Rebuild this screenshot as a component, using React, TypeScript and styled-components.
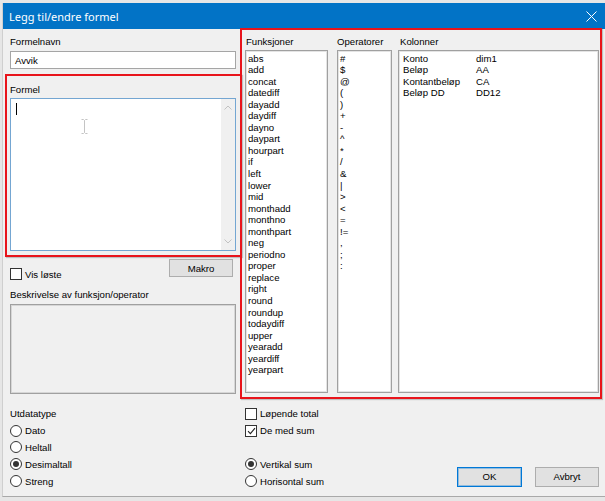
import React from "react";
import styled, { createGlobalStyle } from "styled-components";

const Global = createGlobalStyle`
  html, body { margin: 0; padding: 0; background: #e6e6e6; }
  body { font-family: "Liberation Sans", Arial, sans-serif; font-size: 9.6px; color: #000; }
  * { box-sizing: border-box; }
`;

const Screen = styled.div`
  width: 605px;
  height: 501px;
  overflow: hidden;
  padding: 3px 0 0 2px;
  background: #e6e6e6;
`;

const Window = styled.div`
  background: #f0f0f0;
  border-left: 1px solid #cfcfcf;
  border-bottom: 1px solid #a9a9a9;
  display: flex;
  flex-direction: column;
`;

const TitleBar = styled.div`
  height: 26px;
  background: #0273c6;
  color: #fff;
  display: flex;
  align-items: center;
  justify-content: space-between;
  padding: 0 8px 0 6px;
  font-family: "Noto Sans", "Open Sans", sans-serif;
  font-size: 11px;
`;

const Body = styled.div`
  padding: 0 6px 6.5px 7px;
  display: flex;
  flex-direction: column;
`;

const TopArea = styled.div`
  display: flex;
  gap: 9px;
  align-items: flex-start;
`;

const LeftTop = styled.div`
  width: 226px;
  display: flex;
  flex-direction: column;
  padding-top: 7px;
`;

const RightTop = styled.div`
  width: 354px;
  display: flex;
  flex-direction: column;
`;

const Label = styled.div<{ $pl?: number }>`
  height: 12px;
  line-height: 12px;
  white-space: nowrap;
  padding-left: ${(p) => p.$pl ?? 0}px;
`;

const TextInput = styled.div`
  margin-top: 3px;
  height: 18px;
  background: #fff;
  border: 1px solid #a5a5a5;
  padding: 0 4px;
  display: flex;
  align-items: center;
`;

const Highlight = styled.div<{ $t: number; $r: number; $b: number; $l: number; $mt: number }>`
  border: 2px solid #e8141b;
  box-shadow: 1px 1px 1px rgba(0, 0, 0, 0.2);
  margin: ${(p) => p.$mt - p.$t}px ${(p) => -p.$r}px ${(p) => -p.$b}px ${(p) => -p.$l}px;
  padding: ${(p) => p.$t - 2}px ${(p) => p.$r - 2}px ${(p) => p.$b - 2}px ${(p) => p.$l - 2}px;
  display: flex;
  flex-direction: column;
`;

const FormulaBox = styled.div`
  position: relative;
  margin-top: 2px;
  height: 153px;
  background: #fff;
  border: 1px solid #74a6d2;
  display: flex;
`;

const FormulaText = styled.div`
  flex: 1;
  padding: 4px 5px;
`;

const Caret = styled.div`
  width: 1px;
  height: 12px;
  background: #000;
`;

const MouseCursor = styled.svg`
  position: absolute;
  left: 70px;
  top: 20px;
`;

const ScrollTrack = styled.div`
  width: 14px;
  background: #f0f0f0;
  display: flex;
  flex-direction: column;
  justify-content: space-between;
  align-items: center;
  padding: 6px 0;
`;

const ToolRow = styled.div`
  margin-top: 8px;
  display: flex;
  justify-content: space-between;
  align-items: flex-start;
  height: 20px;
`;

const Button = styled.div<{ $default?: boolean; $w: number; $h: number }>`
  width: ${(p) => p.$w}px;
  height: ${(p) => p.$h}px;
  background: #e1e1e1;
  border: 1px solid ${(p) => (p.$default ? "#0078d7" : "#adadad")};
  box-shadow: ${(p) => (p.$default ? "inset 0 0 0 1px rgba(0,120,215,0.35)" : "none")};
  display: flex;
  align-items: center;
  justify-content: center;
`;

const DescBox = styled.div`
  margin-top: 3px;
  height: 90px;
  background: #f0f0f0;
  border: 1px solid #a0a0a0;
  box-shadow: inset 0 0 0 1px #d6d6d6;
`;

const ListsRow = styled.div`
  display: flex;
`;

const ListCol = styled.div<{ $w: number; $ml: number }>`
  width: ${(p) => p.$w}px;
  margin-left: ${(p) => p.$ml}px;
  display: flex;
  flex-direction: column;
`;

const ListBox = styled.div<{ $px: number }>`
  margin-top: 2px;
  height: 343px;
  background: #fff;
  border: 1px solid #a0a0a0;
  box-shadow: inset 0 0 0 1px #e4e4e4;
  padding: 1.5px ${(p) => p.$px}px;
  overflow: hidden;
`;

const Item = styled.div`
  height: 11.55px;
  line-height: 11.55px;
  white-space: nowrap;
`;

const ColumnItem = styled.div`
  display: grid;
  grid-template-columns: 73px 1fr;
  height: 11.55px;
  line-height: 11.55px;
  white-space: nowrap;
`;

const BottomArea = styled.div`
  margin-top: 11.5px;
  display: grid;
  grid-template-columns: 226px 354px;
  column-gap: 9px;
`;

const OptionCol = styled.div`
  display: flex;
  flex-direction: column;
`;

const OptionRow = styled.div`
  height: 16.8px;
  display: flex;
  align-items: center;
  gap: 3px;
  white-space: nowrap;
`;

const RightBottom = styled.div`
  display: flex;
  justify-content: space-between;
`;

const Buttons = styled.div`
  align-self: flex-end;
  margin-bottom: 2.5px;
  display: flex;
  gap: 13px;
`;

const RadioCircle = styled.span<{ $on?: boolean }>`
  width: 12px;
  height: 12px;
  border-radius: 50%;
  border: 1px solid #333;
  background: #fff;
  display: inline-flex;
  align-items: center;
  justify-content: center;
  flex: none;
  &::after {
    content: "";
    width: 6px;
    height: 6px;
    border-radius: 50%;
    background: ${(p) => (p.$on ? "#333" : "transparent")};
  }
`;

const CheckSquare = styled.span`
  width: 12px;
  height: 12px;
  border: 1px solid #333;
  background: #fff;
  display: inline-flex;
  align-items: center;
  justify-content: center;
  flex: none;
`;

const CheckItem = styled.div<{ $mt?: number }>`
  display: flex;
  align-items: center;
  gap: 3px;
  margin-top: ${(p) => p.$mt ?? 0}px;
  white-space: nowrap;
`;

const Radio = ({ on, label }: { on?: boolean; label: string }) => (
  <OptionRow>
    <RadioCircle $on={on} />
    <span>{label}</span>
  </OptionRow>
);

const Check = ({ on }: { on?: boolean }) => (
  <CheckSquare>
    {on && (
      <svg width="9" height="8" viewBox="0 0 9 8">
        <path d="M1 4.2 L3.4 6.6 L8 1.2" stroke="#222" strokeWidth="1.1" fill="none" />
      </svg>
    )}
  </CheckSquare>
);

const funcs = [
  "abs", "add", "concat", "datediff", "dayadd", "daydiff", "dayno", "daypart", "hourpart", "if",
  "left", "lower", "mid", "monthadd", "monthno", "monthpart", "neg", "periodno", "proper", "replace",
  "right", "round", "roundup", "todaydiff", "upper", "yearadd", "yeardiff", "yearpart",
];
const ops = ["#", "$", "@", "(", ")", "+", "-", "^", "*", "/", "&", "|", ">", "<", "=", "!=", ",", ";", ":"];
const cols: [string, string][] = [
  ["Konto", "dim1"],
  ["Beløp", "AA"],
  ["Kontantbeløp", "CA"],
  ["Beløp DD", "DD12"],
];

export default function App() {
  return (
    <Screen>
      <Global />
      <Window>
        <TitleBar>
          <span>Legg til/endre formel</span>
          <svg width="11" height="11" viewBox="0 0 11 11">
            <path d="M0.5 0.5 L10.5 10.5 M10.5 0.5 L0.5 10.5" stroke="#fff" strokeWidth="1" />
          </svg>
        </TitleBar>
        <Body>
          <TopArea>
            <LeftTop>
              <Label>Formelnavn</Label>
              <TextInput>Avvik</TextInput>
              <Highlight $t={10} $r={6} $b={6} $l={5} $mt={15}>
                <Label>Formel</Label>
                <FormulaBox>
                  <FormulaText>
                    <Caret />
                  </FormulaText>
                  <MouseCursor width="7" height="15" viewBox="0 0 7 15">
                    <path d="M0.5 0.5 H2.5 L3.5 1.5 L4.5 0.5 H6.5 M3.5 1.5 V13.5 M0.5 14.5 H2.5 L3.5 13.5 L4.5 14.5 H6.5" stroke="#c4c4c4" strokeWidth="1" fill="none" />
                  </MouseCursor>
                  <ScrollTrack>
                    <svg width="8" height="5" viewBox="0 0 8 5">
                      <path d="M0.5 4.5 L4 1 L7.5 4.5" stroke="#c2c2c2" strokeWidth="1" fill="none" />
                    </svg>
                    <svg width="8" height="5" viewBox="0 0 8 5">
                      <path d="M0.5 0.5 L4 4 L7.5 0.5" stroke="#c2c2c2" strokeWidth="1" fill="none" />
                    </svg>
                  </ScrollTrack>
                </FormulaBox>
              </Highlight>
              <ToolRow>
                <CheckItem $mt={9}>
                  <Check />
                  <span>Vis løste</span>
                </CheckItem>
                <Button $w={64} $h={18} style={{ marginRight: 3 }}>Makro</Button>
              </ToolRow>
              <Label style={{ marginTop: 10 }}>Beskrivelse av funksjon/operator</Label>
              <DescBox />
            </LeftTop>
            <RightTop>
              <Highlight $t={8} $r={3} $b={6} $l={5} $mt={7}>
                <ListsRow>
                  <ListCol $w={83} $ml={0}>
                    <Label $pl={1}>Funksjoner</Label>
                    <ListBox $px={2}>
                      {funcs.map((f) => (
                        <Item key={f}>{f}</Item>
                      ))}
                    </ListBox>
                  </ListCol>
                  <ListCol $w={55} $ml={9}>
                    <Label>Operatorer</Label>
                    <ListBox $px={2}>
                      {ops.map((o) => (
                        <Item key={o}>{o}</Item>
                      ))}
                    </ListBox>
                  </ListCol>
                  <ListCol $w={201} $ml={6}>
                    <Label $pl={2}>Kolonner</Label>
                    <ListBox $px={4}>
                      {cols.map(([a, b]) => (
                        <ColumnItem key={a}>
                          <span>{a}</span>
                          <span>{b}</span>
                        </ColumnItem>
                      ))}
                    </ListBox>
                  </ListCol>
                </ListsRow>
              </Highlight>
            </RightTop>
          </TopArea>
          <BottomArea>
            <OptionCol>
              <OptionRow>Utdatatype</OptionRow>
              <Radio label="Dato" />
              <Radio label="Heltall" />
              <Radio on label="Desimaltall" />
              <Radio label="Streng" />
            </OptionCol>
            <RightBottom>
              <OptionCol>
                <OptionRow>
                  <Check />
                  <span>Løpende total</span>
                </OptionRow>
                <OptionRow>
                  <Check on />
                  <span>De med sum</span>
                </OptionRow>
                <OptionRow />
                <Radio on label="Vertikal sum" />
                <Radio label="Horisontal sum" />
              </OptionCol>
              <Buttons>
                <Button $default $w={65} $h={20}>OK</Button>
                <Button $w={64} $h={20}>Avbryt</Button>
              </Buttons>
            </RightBottom>
          </BottomArea>
        </Body>
      </Window>
    </Screen>
  );
}
